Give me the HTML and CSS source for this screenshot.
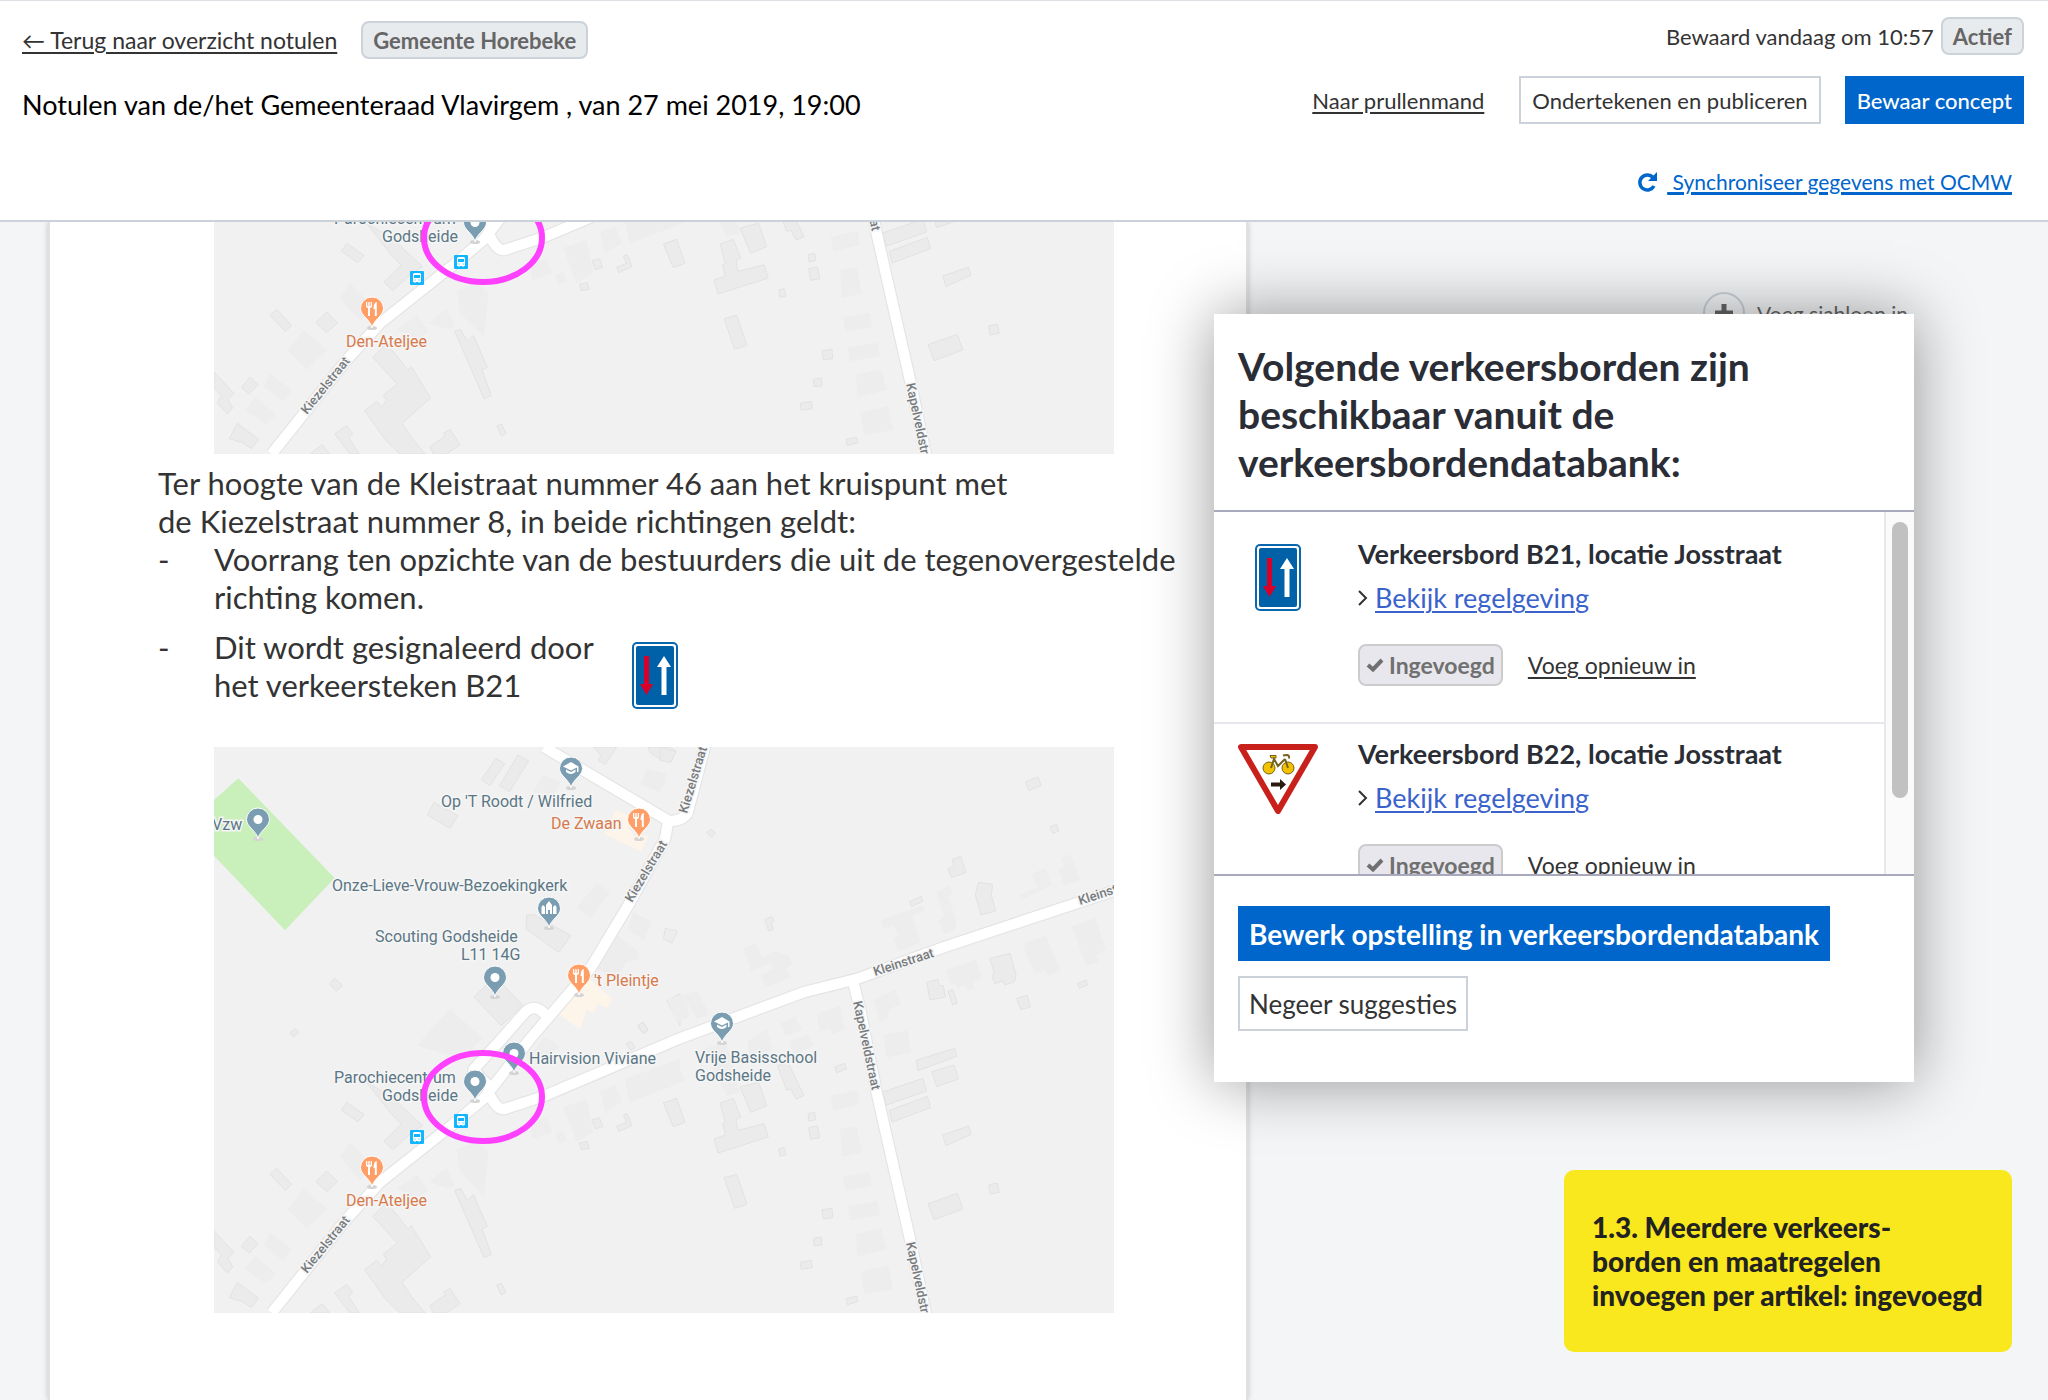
FILE: index.html
```html
<!DOCTYPE html>
<html lang="nl">
<head>
    <meta charset="UTF-8">
    <meta name="viewport" content="width=device-width, initial-scale=1.0">
    <title>Notulen Gemeenteraad Vlavirgem</title>
    <link rel="stylesheet" href="styles.css">
</head>
<body>
    <!-- shared drawings: map, pins, signs, icons -->
    <svg class="defs" width="0" height="0" aria-hidden="true">
        <defs>
            <symbol id="pin" viewBox="0 0 26 36">
                <ellipse cx="13" cy="32" rx="5" ry="2" fill="#d4d4d4"/>
                <path d="M13 32C12 24 1.500 20 1.500 12.500a11.500 11.500 0 0 1 23 0C24.500 20 14 24 13 32z" fill="currentColor" stroke="#fff" stroke-width="1"/>
            </symbol>
            <symbol id="pin-dot" viewBox="0 0 26 36">
                <use href="#pin"/>
                <circle cx="13" cy="12.500" r="4.500" fill="#fff"/>
            </symbol>
            <symbol id="pin-food" viewBox="0 0 26 36">
                <use href="#pin"/>
                <path d="M7 6v4q0 2 2 2v8h2v-8q2 0 2-2V6h-1.300v4h-1V6H9.300v4h-1V6zM17.500 6q-3 1-3 7h1.300v7h2V6z" fill="#fff"/>
            </symbol>
            <symbol id="pin-school" viewBox="0 0 26 36">
                <use href="#pin"/>
                <path d="M13 6 5 10.500l8 4 6-3V16h1.500v-5.500zM8 13.500V16q5 4 9.500 0v-2.500L13 16z" fill="#fff"/>
            </symbol>
            <symbol id="pin-church" viewBox="0 0 26 36">
                <use href="#pin"/>
                <path d="M5.500 18v-7l1.500-2 2 2v7zM10 18v-9l3-4 3 4v9h-2v-4h-2v4zM17 18v-7l2-2 1.500 2v7z" fill="#fff"/>
            </symbol>
            <symbol id="bus" viewBox="0 0 14 14">
                <rect width="14" height="14" rx="1" fill="#12b5ff"/>
                <path d="M3 3.500Q3 2 4.500 2h5Q11 2 11 3.500V11H9.500v1H8.500v-1h-3v1h-1v-1H3z" fill="#fff"/>
                <path d="M4 4h6v3H4zM4.500 8.500h1v1h-1zM8.500 8.500h1v1h-1z" fill="#12b5ff"/>
            </symbol>

            <g id="map-base">
                <rect width="900" height="566" fill="#f1f1f1"/>
                <g transform="scale(.33333)">
                    <path d="M0 159 73 94 362 393 213 550 0 326z" fill="#c9efbb"/>
                    <g transform="translate(-42 -24)">
                        <path class="cafe" d="M1248 212 1290 232 1284 262 1300 290 1346 290 1324 338 1212 284z M1130 760 1170 720 1236 780 1224 806 1194 796 1180 822 1160 812 1140 870 1076 826z"/>
                        <path class="house" d="M888 58 914 74 870 140 844 122z M954 48 986 66 928 158 898 140z M702 190 774 230 750 268 682 228z M1180 24 1190 34 1202 50 1196 66 1216 76 1250 24z M1344 24 1350 40 1380 60 1412 70 1428 36 1410 24z M980 528 1000 526 1113 590 1076 640 978 570z M884 712 968 798 904 860 822 774z M404 718 428 740 410 756 388 736z M284 868 297 880 280 894 270 882z M1330 850 1344 872 1328 882 1314 862z M1396 568 1432 576 1416 612 1390 600z M1440 764 1400 784 1440 860z"/>
                        <path class="faint" d="M1340 90 1400 104 1380 160 1322 136z M1190 432 1230 462 1172 536 1130 506z M1300 518 1356 548 1332 604 1282 570z M1250 588 1312 634 1320 660 1280 668 1250 720 1190 690z M1030 106 1082 130 1056 176 1000 158z M750 810 850 900 668 900z"/>
                    </g>
                    <g transform="translate(-42 756)">
                        <path class="faint" d="M750 30 846 118 790 180 650 140z M310 570 382 630 320 690 262 630z M450 430 520 500 480 544 420 474z M210 700 276 750 250 786 192 740z M166 772 228 824 198 854 134 810z M590 570 650 526 686 574 650 600z M686 548 740 506 764 560 740 568z M770 450 830 430 866 460 852 590 780 520z M1030 114 1080 140 1040 180 1000 160z M1274 240 1440 180 1440 250 1290 312z M1200 276 1246 258 1266 310 1216 340z M1090 324 1160 300 1180 400 1130 430z M990 370 1040 356 1056 400 996 420z M1066 404 1090 396 1100 424 1076 434z"/>
                        <path class="house" d="M440 310 492 346 474 368 424 334z M500 250 570 290 668 380 636 400 578 452 552 426 604 376 570 340z M230 508 275 556 256 574 210 526z M380 516 413 548 380 578 348 548z M150 712 174 734 148 762 124 742z M42 696 102 760 84 778 98 804 82 822 52 788 64 768 42 744z M112 850 176 898 154 926 128 908 88 896z M404 882 440 856 458 882 446 892 478 942 450 942z M330 942 366 914 390 942z M560 610 624 690 634 680 692 774 606 850 640 900 676 942 600 942 556 900 494 812 530 784 546 800 560 780 550 766 592 732 518 652z M690 920 736 888 730 880 750 868 780 914 740 942 700 942z M764 574 782 568 802 604 820 586 862 682 846 690 874 766 852 776z M890 858 904 852 918 880 904 888z M1176 362 1198 356 1208 382 1186 390z M1270 348 1282 344 1296 380 1256 398 1250 382 1280 370z M1138 432 1162 428 1168 448 1144 452z M1392 314 1428 298 1440 330 1440 376 1420 382z M1314 78 1328 70 1344 94 1330 104z M1278 134 1294 128 1306 146 1292 154z"/>
                    </g>
                    <g transform="translate(1338 -24)">
                        <path class="faint" d="M250 628 290 612 306 658 340 636 390 652 396 676 380 690 392 716 318 744 302 708 340 690 330 672 274 698z M662 544 790 498 796 512 756 530 782 610 714 638 700 600 714 590 700 558 670 570z M830 460 868 440 878 460 866 474 890 550 884 574 852 586 838 546 852 530z M1116 404 1156 388 1174 438 1086 482 1078 468 1132 444z M1204 356 1232 346 1260 424 1212 440 1196 394 1212 384z M858 692 948 662 964 716 940 730 942 748 924 756 912 736 894 750 886 734 872 738z M1092 612 1158 590 1202 694 1164 712 1156 694 1126 704 1094 636z M1236 562 1306 538 1338 632 1310 648 1314 670 1278 682z M20 780 110 756 148 826 110 840 80 790 88 834 52 852z M470 824 540 800 554 872 516 886 510 870 480 876z M362 852 404 832 428 872 376 892z M640 782 706 752 722 796 690 810 680 840 660 848z M20 570 50 576 38 606 10 600z M0 104 20 120 0 158z"/>
                        <path class="house" d="M1096 128 1134 114 1144 140 1106 155z M1170 264 1190 256 1197 276 1178 283z M876 362 902 352 918 400 874 416 863 390 882 380z M955 430 998 436 994 468 1007 516 963 528 946 468z M748 488 784 472 788 488 754 502z M314 542 336 532 342 546 334 552 340 572 326 576z M152 270 166 282 154 295 140 282z M0 24 48 38 32 70 0 64z M990 658 1050 643 1068 706 1064 728 1034 738 1028 726 1004 734 996 710 1002 702z M800 730 834 722 838 740 850 740 856 774 810 783z M864 756 878 752 892 792 878 798z M1070 778 1102 769 1111 804 1082 812z M1252 734 1278 723 1283 738 1258 748z"/>
                    </g>
                    <g transform="translate(1338 756)">
                        <path class="faint" d="M262 126 320 90 338 150 270 180z M388 126 446 108 460 140 402 170z M512 290 592 272 598 316 520 334z M540 390 590 380 606 460 546 474z M670 108 742 94 754 160 680 176z M0 200 50 186 76 246 0 276z M130 150 200 130 240 280 200 290z M548 532 628 518 636 560 558 576z M562 624 652 606 660 648 570 664z M588 704 664 688 680 750 592 772z M600 818 684 798 700 870 614 886z"/>
                        <path class="house" d="M10 312 50 298 75 370 40 383z M240 264 296 250 320 320 272 340z M352 200 384 190 432 290 408 300 392 270 380 274z M180 312 220 298 242 354 228 362 234 394 312 374 325 414 174 462 162 420 196 408 188 374 196 370z M356 450 372 446 378 468 360 472z M444 344 464 340 467 362 447 366z M446 386 472 380 480 416 452 421z M524 204 554 193 560 210 530 221z M768 184 884 148 890 172 774 215z M816 218 882 198 896 240 830 263z M666 280 788 238 800 276 680 318z M688 334 802 292 812 326 696 369z M848 408 926 381 933 406 858 440z M192 536 230 526 261 616 224 628z M804 614 892 583 909 630 822 662z M986 558 1012 552 1018 580 990 585z M486 632 516 628 518 656 490 660z M460 718 484 714 486 738 462 740z M420 790 454 784 457 806 424 811z M558 898 590 892 594 908 562 917z"/>
                    </g>
                    <g fill="none" stroke-linejoin="round">
                        <path class="edge" d="M990 0 1363 221Q1398 226 1420 200L1475-10M1363 221 1353 276 1248 466 1128 666 948 876 808 1056 718 1131 498 1306 398 1416 173 1698M823 1016 778 968 860 879 933 796Q965 765 998 808M828 1046Q850 1090 872 1086L988 1048 1398 874 1768 736 1928 696 2188 601 2720 425M1918 706 1938 786 1988 1036 2088 1476 2138 1710"/>
                        <path class="road" d="M990 0 1363 221Q1398 226 1420 200L1475-10M1363 221 1353 276 1248 466 1128 666 948 876 808 1056 718 1131 498 1306 398 1416 173 1698M823 1016 778 968 860 879 933 796Q965 765 998 808M828 1046Q850 1090 872 1086L988 1048 1398 874 1768 736 1928 696 2188 601 2720 425M1918 706 1938 786 1988 1036 2088 1476 2138 1710"/>
                    </g>
                </g>
                <g color="#7b9db1">
                    <use href="#pin-dot" x="31" y="60" width="26" height="36"/>
                    <use href="#pin-school" x="344" y="9" width="26" height="36"/>
                    <use href="#pin-church" x="322" y="149" width="26" height="36"/>
                    <use href="#pin-dot" x="268" y="218" width="26" height="36"/>
                    <use href="#pin-dot" x="287" y="294" width="26" height="36"/>
                    <use href="#pin-dot" x="248" y="322" width="26" height="36"/>
                    <use href="#pin-school" x="495" y="264" width="26" height="36"/>
                </g>
                <g color="#ff9e67">
                    <use href="#pin-food" x="412" y="60" width="26" height="36"/>
                    <use href="#pin-food" x="352" y="216" width="26" height="36"/>
                    <use href="#pin-food" x="145" y="408" width="26" height="36"/>
                </g>
                <use href="#bus" x="240" y="367" width="14" height="14"/>
                <use href="#bus" x="196" y="383" width="14" height="14"/>
            </g>

            <symbol id="sign-b21" viewBox="0 0 46 67">
                <rect width="46" height="67" rx="5" fill="#0a66ad"/>
                <rect x="2" y="2" width="42" height="63" rx="3" fill="#fff"/>
                <rect x="4" y="4" width="38" height="59" rx="2" fill="#0060a8"/>
                <path d="M12 14h5v28h4l-6.500 11L8 42h4z" fill="#d80027"/>
                <path d="M29.500 53h5V25H39l-7-11-7 11h4.500z" fill="#fff"/>
            </symbol>
            <symbol id="sign-b22" viewBox="0 0 80 70">
                <path d="M3 3h74L40 67z" fill="#fff" stroke="#c8211c" stroke-width="6" stroke-linejoin="round"/>
                <g fill="#f2c100" stroke="#75621c">
                    <circle cx="31" cy="24" r="6"/>
                    <circle cx="50" cy="24" r="6"/>
                    <path d="M32 11.500h6v2.500h-5z"/>
                    <path d="m33 24 3-9 4 7 7-7M47 15l3 9M45 11.500q7-2 6 3" fill="none" stroke-width="2"/>
                </g>
                <path d="M33 38.500h9V35l6 5.500-6 5.500v-3.500h-9z" fill="#2a1a10"/>
            </symbol>
            <symbol id="check" viewBox="0 0 18 14">
                <path d="m2 7 5 4.500L16 2" fill="none" stroke="currentColor" stroke-width="4"/>
            </symbol>
            <symbol id="chevron" viewBox="0 0 10 16">
                <path d="m1 1 7 7-7 7" fill="none" stroke="currentColor" stroke-width="2"/>
            </symbol>
        </defs>
    </svg>

    <header class="topbar">
        <div class="topbar-left">
            <div class="topbar-row">
                <a class="link" href="#">← Terug naar overzicht notulen</a>
                <span class="badge">Gemeente Horebeke</span>
            </div>
            <h1>Notulen van de/het Gemeenteraad Vlavirgem , van 27 mei 2019, 19:00</h1>
        </div>
        <div class="topbar-right">
            <div class="status">
                <span>Bewaard vandaag om 10:57</span>
                <span class="badge">Actief</span>
            </div>
            <div class="actions">
                <a class="link" href="#">Naar prullenmand</a>
                <button class="btn">Ondertekenen en publiceren</button>
                <button class="btn btn-primary">Bewaar concept</button>
            </div>
            <a class="sync" href="#">
                <svg width="20" height="22" viewBox="0 0 20 22"><path d="M16 6.500A7.500 7.500 0 1 0 17 15" fill="none" stroke="currentColor" stroke-width="3.500"/><path d="M20 1v9h-9z" fill="currentColor"/></svg>
                <span>&nbsp;Synchroniseer gegevens met OCMW</span>
            </a>
        </div>
    </header>

    <main class="workspace">
        <article class="paper">
            <figure class="map map-cut">
                <svg viewBox="0 0 900 566">
                    <use href="#map-base"/>
                    <g class="place">
                        <text x="120" y="336">Parochiecentrum</text>
                        <text x="168" y="354">Godsheide</text>
                        <text class="food" x="132" y="459">Den-Ateljee</text>
                    </g>
                    <g class="street">
                        <text transform="translate(93 527) rotate(-51)">Kiezelstraat</text>
                        <text transform="translate(639 255) rotate(78)">Kapelveldstraat</text>
                        <text transform="translate(692 496) rotate(78)">Kapelveldstraat</text>
                    </g>
                    <ellipse class="marker" cx="269" cy="350" rx="59" ry="44"/>
                </svg>
            </figure>
            <p>Ter hoogte van de Kleistraat nummer 46 aan het kruispunt met<br>de Kiezelstraat nummer 8, in beide richtingen geldt:</p>
            <ul>
                <li>Voorrang ten opzichte van de bestuurders die uit de tegenovergestelde richting komen.</li>
                <li>
                    <div class="signal">
                        <span>Dit wordt gesignaleerd door<br>het verkeersteken B21</span>
                        <svg width="46" height="67"><use href="#sign-b21"/></svg>
                    </div>
                </li>
            </ul>
            <figure class="map">
                <svg viewBox="0 0 900 566">
                    <use href="#map-base"/>
                    <g class="place">
                        <text x="-2" y="83">Vzw</text>
                        <text x="227" y="60">Op 'T Roodt / Wilfried</text>
                        <text class="food" x="337" y="82">De Zwaan</text>
                        <text x="118" y="144">Onze-Lieve-Vrouw-Bezoekingkerk</text>
                        <text x="161" y="195">Scouting Godsheide</text>
                        <text x="247" y="213">L11 14G</text>
                        <text class="food" x="380" y="239">'t Pleintje</text>
                        <text x="315" y="317">Hairvision Viviane</text>
                        <text x="120" y="336">Parochiecentrum</text>
                        <text x="168" y="354">Godsheide</text>
                        <text x="481" y="316">Vrije Basisschool</text>
                        <text x="481" y="334">Godsheide</text>
                        <text class="food" x="132" y="459">Den-Ateljee</text>
                    </g>
                    <g class="street">
                        <text transform="translate(473 67) rotate(-73)">Kiezelstraat</text>
                        <text transform="translate(418 156) rotate(-59)">Kiezelstraat</text>
                        <text transform="translate(93 527) rotate(-51)">Kiezelstraat</text>
                        <text transform="translate(661 229) rotate(-18)">Kleinstraat</text>
                        <text transform="translate(866 158) rotate(-18)">Kleinstraat</text>
                        <text transform="translate(639 255) rotate(78)">Kapelveldstraat</text>
                        <text transform="translate(692 496) rotate(78)">Kapelveldstraat</text>
                    </g>
                    <ellipse class="marker" cx="269" cy="350" rx="59" ry="44"/>
                </svg>
            </figure>
        </article>

        <aside class="side">
            <button class="template-btn">
                <span class="plus"><svg width="20" height="20" viewBox="0 0 20 20"><path d="M10 1v18M1 10h18" stroke="currentColor" stroke-width="5"/></svg></span>
                Voeg sjabloon in
            </button>
            <div class="note">1.3. Meerdere verkeers-<br>borden en maatregelen<br>invoegen per artikel: ingevoegd</div>
        </aside>

        <section class="suggestions" aria-labelledby="suggestions-title">
            <h2 id="suggestions-title">Volgende verkeersborden zijn beschikbaar vanuit de verkeersbordendatabank:</h2>
            <div class="suggestions-body">
                <div class="suggestions-list">
                    <div class="suggestion">
                        <div class="sign"><svg width="46" height="67"><use href="#sign-b21"/></svg></div>
                        <div>
                            <h3>Verkeersbord B21, locatie Josstraat</h3>
                            <div class="rule"><svg width="10" height="16"><use href="#chevron"/></svg><a href="#">Bekijk regelgeving</a></div>
                            <div class="state">
                                <span class="badge inserted"><svg width="18" height="14"><use href="#check"/></svg>Ingevoegd</span>
                                <a class="link" href="#">Voeg opnieuw in</a>
                            </div>
                        </div>
                    </div>
                    <div class="suggestion">
                        <div class="sign"><svg width="80" height="70"><use href="#sign-b22"/></svg></div>
                        <div>
                            <h3>Verkeersbord B22, locatie Josstraat</h3>
                            <div class="rule"><svg width="10" height="16"><use href="#chevron"/></svg><a href="#">Bekijk regelgeving</a></div>
                            <div class="state">
                                <span class="badge inserted"><svg width="18" height="14"><use href="#check"/></svg>Ingevoegd</span>
                                <a class="link" href="#">Voeg opnieuw in</a>
                            </div>
                        </div>
                    </div>
                </div>
                <div class="track"><div class="thumb"></div></div>
            </div>
            <div class="suggestions-footer">
                <button class="btn btn-primary btn-large">Bewerk opstelling in verkeersbordendatabank</button>
                <button class="btn btn-large">Negeer suggesties</button>
            </div>
        </section>
    </main>
</body>
</html>
```

FILE: styles.css
```css
* {
    box-sizing: border-box;
}
body {
    margin: 0;
    min-height: 100vh;
    display: flex;
    flex-direction: column;
    font-family: Lato, "Liberation Sans", sans-serif;
    font-size: 22px;
    color: #333;
    background-color: #f3f5f7;
}
h1, h2, h3, p, ul, figure {
    margin: 0;
    padding: 0;
}
svg {
    display: block;
    flex: none;
}
.defs {
    position: absolute;
}
.link {
    color: #333;
    text-underline-offset: 3px;
}
.badge {
    display: inline-flex;
    align-items: center;
    height: 38px;
    padding: 0 10px;
    font-weight: bold;
    color: #666;
    background-color: #e8ebee;
    border: 2px solid #cbd2da;
    border-radius: 8px;
}

/* top bar */
.topbar {
    display: flex;
    justify-content: space-between;
    height: 222px;
    padding: 16px 24px 0 22px;
    background-color: #fff;
    border-top: 1px solid #dde1e6;
    border-bottom: 2px solid #cbd2d9;
}
.topbar-row {
    display: flex;
    align-items: center;
    gap: 24px;
    height: 46px;
}
.topbar-row .link {
    font-size: 23px;
}
h1 {
    margin-top: 24px;
    font-size: 27px;
    line-height: 36px;
    font-weight: normal;
    color: #000;
}
.topbar-right {
    display: flex;
    flex-direction: column;
    align-items: flex-end;
}
.status {
    display: flex;
    align-items: center;
    gap: 7px;
}
.actions {
    display: flex;
    align-items: center;
    margin-top: 21px;
}
.actions .link {
    margin-right: 35px;
}
.actions .btn-primary {
    margin-left: 24px;
}
.btn {
    height: 48px;
    padding: 0 11px;
    font: inherit;
    color: #333;
    background-color: #fff;
    border: 2px solid #cbd2da;
    cursor: pointer;
}
.btn-primary {
    padding: 0 10px;
    color: #fff;
    background-color: #0066cc;
    border-color: #0066cc;
    font-weight: 500;
}
.sync {
    display: flex;
    align-items: center;
    gap: 10px;
    margin: 45px 12px 0 0;
    font-size: 21px;
    color: #0066cc;
}
.sync span {
    text-decoration: underline;
    text-underline-offset: 3px;
}

/* document */
.workspace {
    position: relative;
    flex: 1;
    display: grid;
    grid-template-columns: 3fr 2fr;
    padding-left: 48px;
}
.paper {
    padding: 0 60px 84px 108px;
    font-size: 31px;
    line-height: 38px;
    background-color: #fff;
    border: 2px solid #dfe2e5;
    border-width: 0 2px;
    box-shadow: 0 0 6px rgba(0, 0, 0, 0.2);
    clip-path: inset(0 -10px);
}
.map {
    max-width: 900px;
    margin-left: 56px;
}
.map svg {
    width: 100%;
}
.map-cut {
    display: flex;
    align-items: flex-end;
    height: 232px;
    margin-bottom: 10px;
    overflow: hidden;
}
.paper ul {
    list-style: none;
}
.paper li {
    display: grid;
    grid-template-columns: 56px 1fr;
    margin-bottom: 12px;
}
.paper li::before {
    content: "-";
}
.paper li:last-child {
    margin-bottom: 38px;
}
.signal {
    display: flex;
    align-items: flex-start;
    gap: 38px;
}
.signal svg {
    margin-top: 14px;
}
.cafe {
    fill: #fdf4ea;
}
.house {
    fill: #ebebeb;
    stroke: #e2e2e2;
    stroke-width: 3px;
}
.faint {
    fill: #ededed;
}
.edge {
    stroke: #e4e4e4;
    stroke-width: 38px;
}
.road {
    stroke: #fff;
    stroke-width: 31px;
}
.place, .street {
    font-family: Roboto, sans-serif;
    stroke: #f5f5f5;
    stroke-width: 3px;
    paint-order: stroke;
}
.place {
    font-size: 16px;
    fill: #5b7785;
}
.place .food {
    fill: #d77a4c;
}
.street {
    font-size: 13px;
    font-weight: 500;
    fill: #777b7e;
}
.marker {
    fill: none;
    stroke: #ff40ff;
    stroke-width: 6px;
}

/* right column */
.side {
    display: flex;
    flex-direction: column;
    align-items: flex-end;
    padding: 70px 36px 0 0;
}
.template-btn {
    display: flex;
    align-items: center;
    gap: 12px;
    margin-right: 104px;
    padding: 0;
    font: inherit;
    font-size: 21px;
    color: #666;
    background: none;
    border: none;
}
.plus {
    display: flex;
    align-items: center;
    justify-content: center;
    width: 42px;
    height: 42px;
    border: 2px solid #cbd2da;
    border-radius: 50%;
}
.note {
    min-width: 448px;
    margin-top: 836px;
    padding: 40px 16px 40px 28px;
    font-size: 28px;
    line-height: 34px;
    font-weight: 900;
    color: #222;
    background-color: #f9e81d;
    border-radius: 10px;
}

/* suggestions dialog, floats over the document */
.suggestions {
    position: absolute;
    top: 92px;
    right: 134px;
    width: 700px;
    background-color: #fff;
    box-shadow: 0 0 60px rgba(0, 0, 0, 0.4);
}
h2 {
    padding: 28px 100px 24px 24px;
    font-size: 39px;
    line-height: 48px;
    color: #2a2d35;
}
.suggestions-body {
    display: flex;
    height: 366px;
    border: 2px solid #a9a9be;
    border-width: 2px 0;
}
.suggestions-list {
    flex: 1;
    padding-top: 12px;
    overflow: hidden;
}
.suggestion {
    display: grid;
    grid-template-columns: 80px 1fr;
    gap: 40px;
    height: 200px;
    padding: 13px 24px 0;
    border-bottom: 2px solid #e6e6ec;
}
.sign {
    display: flex;
    justify-content: center;
    align-items: flex-start;
    padding-top: 7px;
}
h3 {
    font-size: 27px;
    line-height: 34px;
    color: #2a2d35;
}
.rule {
    display: flex;
    align-items: center;
    gap: 7px;
    margin-top: 10px;
    font-size: 27px;
    line-height: 34px;
}
.rule a {
    color: #3a62cc;
    text-underline-offset: 3px;
    text-decoration-thickness: 2px;
}
.state {
    display: flex;
    align-items: center;
    gap: 25px;
    margin-top: 29px;
    font-size: 23px;
}
.inserted {
    gap: 5px;
    height: 42px;
    padding: 0 6px;
    color: #707070;
    background-color: #e8e7ee;
    border-color: #ccc;
}
.track {
    width: 30px;
    padding: 10px 6px 0;
    background-color: #fafafa;
    border-left: 2px solid #e8e8e8;
}
.thumb {
    height: 276px;
    background-color: #c1c1c1;
    border-radius: 8px;
}
.suggestions-footer {
    display: flex;
    flex-direction: column;
    align-items: flex-start;
    gap: 15px;
    padding: 30px 24px 51px;
}
.btn-large {
    height: 55px;
    padding: 0 9px;
    font-size: 26px;
}
.btn-large.btn-primary {
    font-size: 28px;
    font-weight: bold;
}
```
